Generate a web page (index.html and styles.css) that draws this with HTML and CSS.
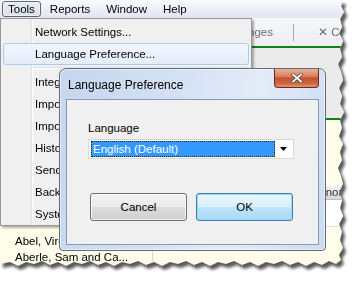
FILE: index.html
```html
<!DOCTYPE html>
<html>
<head>
  <title>Language Preference</title>
  <link rel="stylesheet" href="styles.css">
</head>
<body>
  <div class="paper">
    <div class="shot">
      <div class="menubar">
        <span class="open">Tools</span>
        <span>Reports</span>
        <span>Window</span>
        <span>Help</span>
      </div>

      <div class="toolbar">
        <span class="tb-save">Save Changes</span>
        <span class="tb-sep"></span>
        <span class="tb-cancel">&#x2715; Cancel</span>
      </div>
      <div class="green-line"></div>

      <div class="workspace">
        <div class="list">
          <div>Abel, Virginia</div>
          <div>Aberle, Sam and Ca...</div>
        </div>
        <div class="detail">
          <div class="detail-top"></div>
          <div class="green-line"></div>
          <div class="detail-band"></div>
          <div class="grid-head"><span>Donor</span></div>
          <div class="grid-row"></div>
        </div>
      </div>

      <!-- open Tools menu -->
      <div class="menu">
        <div class="menu-item">Network Settings...</div>
        <div class="menu-item hot">Language Preference...</div>
        <div class="menu-sep"></div>
        <div class="menu-item">Integration...</div>
        <div class="menu-item">Import...</div>
        <div class="menu-item">Import Settings...</div>
        <div class="menu-item">History...</div>
        <div class="menu-item">Send Diagnostics...</div>
        <div class="menu-item">Backup...</div>
        <div class="menu-item">System Information...</div>
      </div>

      <!-- modal dialog -->
      <div class="dialog">
        <div class="dlg-title">
          <span class="dlg-caption">Language Preference</span>
          <span class="dlg-close">
            <svg width="12" height="10" viewBox="0 0 12 10">
              <path d="M2 1.5L10 8.5M10 1.5L2 8.5" stroke="#4a4a4a" stroke-width="3.4" stroke-linecap="square"/>
              <path d="M2 1.5L10 8.5M10 1.5L2 8.5" stroke="#fff" stroke-width="1.8" stroke-linecap="square"/>
            </svg>
          </span>
        </div>
        <div class="dlg-client">
          <div class="field-label">Language</div>
          <div class="select">
            <span class="sel-value">English (Default)</span>
            <span class="sel-arrow">
              <svg width="7" height="4" viewBox="0 0 7 4"><path d="M0 0H7L3.5 4Z" fill="#000"/></svg>
            </span>
          </div>
          <div class="buttons">
            <button class="btn">Cancel</button>
            <button class="btn default">OK</button>
          </div>
        </div>
      </div>
    </div>
  </div>
</body>
</html>
```

FILE: styles.css
```css
body {
  margin: 0;
  background: #fff;
  font-family: "Liberation Sans", Arial, sans-serif;
  font-size: 11.5px;
  color: #000;
}

/* torn-paper screenshot */
.paper {
  width: 352px;
  height: 274px;
  filter: drop-shadow(3px 4px 1.5px rgba(0, 0, 0, 0.65));
}

.shot {
  position: relative;
  width: 344px;
  height: 266px;
  overflow: hidden;
  background: #fffde9;
  display: flex;
  flex-direction: column;
  clip-path: polygon(0 0, 343px 0, 341px 6px, 344px 12px, 340px 19px, 342px 27px, 339px 33px, 343px 41px, 340px 49px, 342px 57px, 338px 64px, 341px 72px, 343px 80px, 339px 88px, 342px 96px, 340px 104px, 344px 112px, 340px 120px, 342px 128px, 339px 136px, 343px 144px, 340px 152px, 342px 160px, 338px 168px, 341px 176px, 343px 184px, 339px 192px, 342px 200px, 340px 208px, 343px 216px, 339px 224px, 342px 232px, 340px 240px, 343px 248px, 339px 255px, 341px 260px, 336px 264px, 329px 261px, 322px 265px, 314px 262px, 306px 266px, 298px 262px, 290px 265px, 282px 261px, 274px 264px, 266px 262px, 258px 266px, 250px 262px, 242px 265px, 234px 261px, 226px 264px, 218px 262px, 210px 266px, 202px 262px, 194px 265px, 186px 261px, 178px 264px, 170px 262px, 162px 266px, 154px 262px, 146px 265px, 138px 261px, 130px 264px, 122px 262px, 114px 266px, 106px 262px, 98px 265px, 90px 261px, 82px 264px, 74px 262px, 66px 266px, 58px 262px, 50px 265px, 42px 261px, 34px 264px, 26px 262px, 18px 266px, 10px 262px, 0 264px);
}

/* menu bar */
.menubar {
  height: 18px;
  flex-shrink: 0;
  display: flex;
  align-items: center;
  padding-left: 2px;
  background: linear-gradient(#f8fafd, #dfe6f1);
}

.menubar span {
  padding: 0 6px;
  line-height: 14px;
  border: 1px solid transparent;
  border-radius: 3px;
  margin-right: 2px;
}

.menubar .open {
  padding: 0 5px;
  border-color: #5f6670;
  background: linear-gradient(#e9edf3, #d9e0ea);
  box-shadow: inset 0 0 0 1px rgba(255, 255, 255, 0.5);
}

/* toolbar behind the menu */
.toolbar {
  height: 28px;
  flex-shrink: 0;
  display: flex;
  align-items: center;
  background: linear-gradient(#f6f7f9, #eceef1);
  color: #6d6d6d;
  white-space: nowrap;
}

.tb-save {
  width: 273px;
  flex-shrink: 0;
  text-align: right;
}

.tb-sep {
  width: 1px;
  height: 17px;
  flex-shrink: 0;
  margin: 0 24px 0 20px;
  background: #a6a6a6;
}

.green-line {
  height: 2px;
  flex-shrink: 0;
  background: #14801a;
}

.workspace {
  flex: 1;
  display: flex;
}

.list {
  width: 152px;
  border-right: 1px solid #d8d8d8;
  display: flex;
  flex-direction: column;
  justify-content: flex-end;
  padding-bottom: 1px;
}

.list div {
  height: 16px;
  line-height: 16px;
  padding-left: 15px;
  white-space: nowrap;
}

.detail {
  flex: 1;
  display: flex;
  flex-direction: column;
}

.detail-top {
  height: 70px;
  background: #ebebeb;
}

.detail-band {
  height: 66px;
}

.grid-head {
  height: 13px;
  line-height: 13px;
  padding-left: 158px;
  background: linear-gradient(#f1f1f1, #d9d9d9);
  border-bottom: 1px solid #bdbdbd;
  color: #333;
  white-space: nowrap;
}

.grid-row {
  height: 26px;
  background: #fff;
  border-bottom: 1px solid #e2e2e2;
}

/* dropdown menu */
.menu {
  position: absolute;
  left: 0;
  top: 18px;
  width: 246px;
  padding: 2px 2px 0;
  border: 1px solid #979797;
  background-color: #f0f0f0;
  background-image: linear-gradient(to right, transparent 30px, #e2e3e3 30px, #e2e3e3 31px, #fff 31px, #fff 32px, transparent 32px);
  box-shadow: 2px 2px 2px rgba(0, 0, 0, 0.3);
  white-space: nowrap;
}

.menu-item {
  height: 20px;
  line-height: 20px;
  padding-left: 31px;
  border: 1px solid transparent;
  border-radius: 3px;
}

.menu-item.hot {
  border-color: #abcbee;
  background: linear-gradient(#f1f6fd, #e3edfa);
}

.menu-sep {
  height: 6px;
  margin-left: 30px;
  background: linear-gradient(transparent 2px, #e0e0e0 2px, #e0e0e0 3px, #fff 3px, #fff 4px, transparent 4px);
}

/* dialog */
.dialog {
  position: absolute;
  left: 59px;
  top: 68px;
  width: 267px;
  height: 183px;
  box-sizing: border-box;
  padding: 0 6px 5px;
  border: 1px solid #5d6b7d;
  border-radius: 7px 7px 4px 4px;
  background: linear-gradient(100deg, #c6d6ee 0%, #d4e1f4 40%, #e3ebf8 68%, #cddbf1 100%);
  box-shadow: inset 0 0 0 1px rgba(255, 255, 255, 0.55);
  display: flex;
  flex-direction: column;
}

.dlg-title {
  height: 30px;
  flex-shrink: 0;
  display: flex;
  justify-content: space-between;
  align-items: flex-start;
}

.dlg-caption {
  margin-top: 8px;
  padding-left: 2px;
  line-height: 16px;
  font-size: 12px;
}

.dlg-close {
  width: 43px;
  height: 18px;
  border: 1px solid #6b2a1c;
  border-top: 0;
  border-radius: 0 0 4px 4px;
  background: linear-gradient(#eab096 0%, #d98360 40%, #c4532e 50%, #cd6640 80%, #e4956f 100%);
  display: flex;
  align-items: center;
  justify-content: center;
}

.dlg-client {
  flex: 1;
  padding: 21px 0 0 21px;
  border: 1px solid #8598b4;
  background: #f0f0f0;
}

.field-label {
  line-height: 15px;
  margin-bottom: 3px;
}

.select {
  width: 206px;
  height: 20px;
  box-sizing: border-box;
  padding: 1px 1px 1px 2px;
  border: 1px solid #dadada;
  background: #fff;
  display: flex;
}

.sel-value {
  width: 184px;
  box-sizing: border-box;
  padding-left: 1px;
  line-height: 14px;
  border: 1px dotted #3a2410;
  background: #3399ff;
  color: #fff;
}

.sel-arrow {
  flex: 1;
  display: flex;
  align-items: center;
  justify-content: center;
}

.buttons {
  display: flex;
  gap: 9px;
  margin: 34px 0 0 2px;
}

.btn {
  width: 97px;
  height: 28px;
  padding: 0;
  font: inherit;
  color: #000;
  border: 1px solid #707070;
  border-radius: 3px;
  background: linear-gradient(#f2f2f2 0%, #ebebeb 50%, #dddddd 50%, #cfcfcf 100%);
  box-shadow: inset 0 0 0 1px rgba(255, 255, 255, 0.7);
}

.btn.default {
  border-color: #3c7fb1;
  background: linear-gradient(#eaf6fd 0%, #d9f0fc 50%, #bee6fd 50%, #a7d9f5 100%);
  box-shadow: inset 0 0 0 1px #9fd6f3;
}
```
